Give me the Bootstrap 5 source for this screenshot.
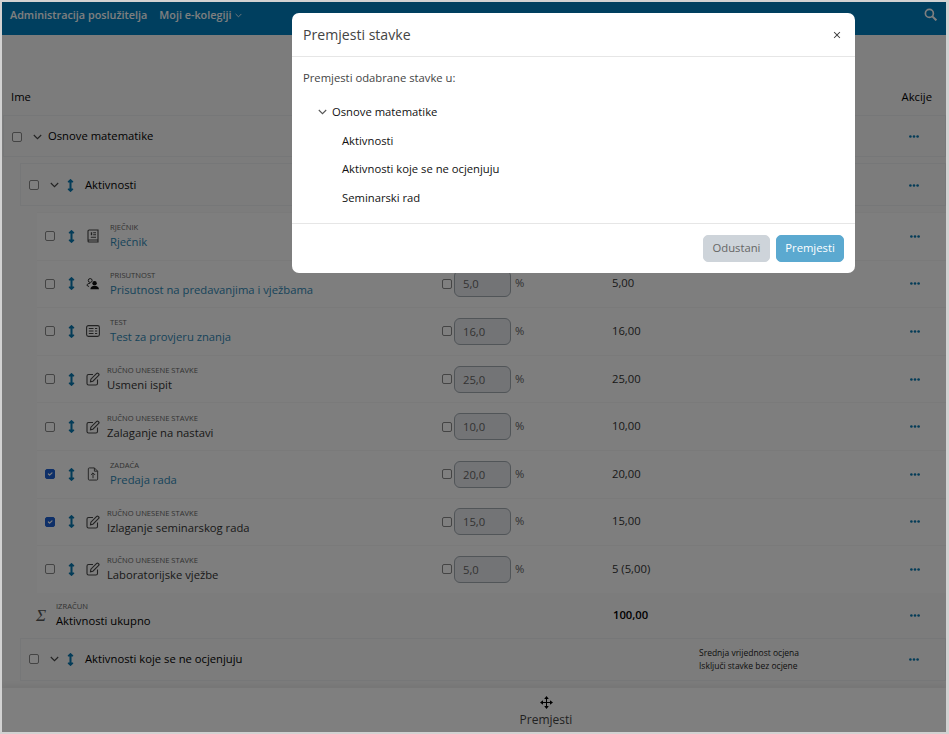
<!DOCTYPE html>
<html lang="hr">
<head>
  <meta charset="UTF-8" />
  <title>Premjesti stavke</title>
  <meta name="viewport" content="width=device-width, initial-scale=1" />
  <link href="https://cdn.jsdelivr.net/npm/bootstrap@5.3.3/dist/css/bootstrap.min.css" rel="stylesheet" />
  <style>
    html, body { height: 100%; }
    body {
      background: #d2d2d2;
      padding: 2px 3px 2px 2px;
      font-family: "Open Sans", "Liberation Sans", sans-serif;
      font-size: 11.25px;
      color: #333;
      overflow: hidden;
    }
    .shell {
      position: relative;
      height: 730px;
      background: #f8f8f8;
      overflow: hidden;
    }
    .top-bar { height: 33px; background: #007ebe; padding: 0 9px 0 8px; }
    .top-bar .nav-link { color: #fff; font-weight: 600; padding: 5px 0 0; font-size: 10.8px; }
    .top-bar .nav { column-gap: 12px; }
    .top-bar .search-ico { width: 13px; height: 13px; margin-top: 6px; color: #fff; }
    .head-row { padding: 54px 14px 0 9px; height: 80px; color: #000; font-weight: 500; }
    .box-row {
      height: 43px;
      border: 1px solid #eceef0;
      background: #f9f9f9;
    }
    .top-box { margin: 0 0 6px 1px; height: 42px; padding-top: 1px; }
    .cat-box { margin: 0 0 6px 18px; padding-top: 1px; }
    .cat-last { margin: 0 0 0 18px; }
    .box-title { color: #000; font-weight: 500; }
    .item-row {
      height: 47.6px;
      margin-left: 35px;
      background: #fcfcfc;
      border-top: 1px solid #f4f4f4;
    }
    .calc-row { height: 45px; margin-left: 18px; }
    .col-name { width: 405px; flex: none; }
    .col-weight { width: 170px; flex: none; }
    .col-value { width: 87px; flex: none; }
    .col-note { flex: 1 1 auto; font-size: 8.5px; line-height: 13px; color: #222; }
    .col-act { width: 64px; flex: none; padding-left: 28px; }
    .cb.form-check-input {
      width: 10px;
      height: 10px;
      margin: 0;
      flex: none;
      border: 1px solid #888;
      border-radius: 2px;
      background-color: #fff;
    }
    .cb.form-check-input:checked { background-color: #1c5fd0; border-color: #1c5fd0; }
    .ico-move { width: 7px; height: 13px; color: #0878b0; flex: none; }
    .ico-chev { width: 9px; height: 6px; flex: none; color: #444; }
    .ico-dots { width: 10px; height: 3px; color: #0878b0; display: block; }
    .ico-type { width: 14px; height: 14px; flex: none; color: #444; }
    .ico-users { color: #111; }
    .item-label { font-size: 7.6px; line-height: 11px; color: #666; text-transform: uppercase; }
    .item-name { font-size: 11.25px; line-height: 17px; color: #333; }
    .item-name.box-title { color: #000; }
    .item-name a { color: #2f88b5; text-decoration: none; }
    .name-link { margin-left: 10px; }
    .name-plain { margin-left: 7px; }
    .grade-box {
      width: 57px;
      height: 27px;
      margin: 0 4px 0 2px;
      padding: 0 8px;
      color: #666;
      background: #e6e9ed;
      border: 1px solid #a2aab1;
      border-radius: 6px;
      line-height: 25px;
    }
    .pct { color: #666; }
    .sigma { font-family: "Liberation Serif", serif; font-style: italic; font-size: 17px; color: #555; width: 20px; flex: none; }
    .bottom-bar {
      position: relative;
      margin-top: 7px;
      height: 44px;
      background: #fff;
      box-shadow: 0 -3px 5px rgba(0, 0, 0, .05);
      padding: 8px 0 0 516px;
      text-align: center;
      color: #444;
      font-size: 12px;
    }
    .bottom-bar .txt-wrap { width: 56px; }
    .ico-cross { width: 13px; height: 13px; color: #000; margin: 0 auto 2px; display: block; }
    .modal-backdrop.shade { position: absolute; width: 100%; height: 100%; z-index: 10; }
    .modal.move-modal { position: absolute; display: block; z-index: 20; overflow: hidden; }
    .move-modal .modal-dialog { max-width: 563px; width: 563px; margin: 11px 0 0 290px; }
    .move-modal .modal-content { border: 0; border-radius: 7px; }
    .move-modal .modal-header { height: 44px; padding: 1px 11px 0 11px; border-bottom: 1px solid #e6e6e6; }
    .move-modal .modal-title { font-size: 14.1px; color: #444; font-weight: 400; }
    .move-modal .btn-close { width: 8px; height: 8px; padding: 0; margin: 0 3px 0 0; background-size: 8px; opacity: .75; }
    .move-modal .modal-body { padding: 13px 11px 0; height: 166px; color: #444; }
    .tree-root { padding: 17px 0 0 15px; color: #111; font-weight: 500; }
    .tree-root .ico-chev { color: #555; margin-right: 5px; }
    .tree-list { padding: 0 0 0 39px; margin: 0; list-style: none; color: #111; font-weight: 500; }
    .tree-list li { height: 28.4px; line-height: 28.4px; }
    .tree-list li:first-child { margin-top: 6px; }
    .move-modal .modal-footer { height: 50px; padding: 0 11px; border-top: 1px solid #e6e6e6; }
    .move-modal .modal-footer .btn { font-size: 11.25px; height: 27px; padding: 0; margin: 0 0 0 6px; border-radius: 5px; width: 68px; }
    .move-modal .modal-footer .btn-cancel { width: 67px; }
    .btn-cancel { background: #ced4da; border-color: #ced4da; color: #666; }
    .btn-move { background: #5ba9d0; border-color: #5ba9d0; color: #fff; }
  </style>
</head>
<body>
  <svg width="0" height="0" class="position-absolute">
    <symbol id="i-move" viewBox="0 0 256 512"><path fill="currentColor" d="M214 378h-46V134h46c21 0 32-26 17-41L145 7c-9-9-25-9-34 0L25 93c-15 15-4 41 17 41h46v244H42c-21 0-32 26-17 41l86 86c9 9 25 9 34 0l86-86c15-15 4-41-17-41z"/></symbol>
    <symbol id="i-chev" viewBox="0 0 9 6"><path fill="none" stroke="currentColor" stroke-width="1.1" d="M.8 1l3.700 3.700L8.200 1"/></symbol>
    <symbol id="i-dots" viewBox="0 0 10 3"><circle cx="1.400" cy="1.500" r="1.300" fill="currentColor"/><circle cx="5" cy="1.500" r="1.300" fill="currentColor"/><circle cx="8.600" cy="1.500" r="1.300" fill="currentColor"/></symbol>
    <symbol id="i-book" viewBox="0 0 14 14"><path fill="none" stroke="currentColor" stroke-width="1.100" d="M2 11.500V2.200C2 1.500 2.500 1 3.200 1H12v10H3c-.6 0-1 .4-1 1s.4 1 1 1h9v-2"/><path fill="currentColor" d="M4.800 3.200h1.400v3H4.800zM7.200 3.200h2.800v1H7.200zM7.200 5.200h2.800v1H7.200zM4.800 7.800h5.200v1H4.800z"/></symbol>
    <symbol id="i-users" viewBox="0 0 16 14"><circle cx="4.800" cy="3" r="2.200" fill="none" stroke="currentColor"/><path fill="none" stroke="currentColor" d="M1 8.500c.4-1.400 1.800-2.300 3.800-2.300M1 8.500l2.500 1.500"/><circle cx="9.800" cy="6" r="2.500" fill="currentColor"/><path fill="currentColor" d="M5 13c0-2.600 2-4 4.800-4s5 1.400 5 4z"/></symbol>
    <symbol id="i-list" viewBox="0 0 14 14"><rect x=".6" y="1.600" width="12.800" height="10.800" rx="1.800" fill="none" stroke="currentColor" stroke-width="1.100"/><path fill="currentColor" d="M2.800 4h4.700v1H2.800zM2.800 6.500h4.700v1H2.800zM2.800 9h4.700v1H2.800zM9 4h2.200v1H9zM9 6.500h2.200v1H9zM9 9h2.200v1H9z"/></symbol>
    <symbol id="i-edit" viewBox="0 0 14 14"><path fill="none" stroke="currentColor" stroke-width="1.100" d="M7 2.500H2.600C1.700 2.500 1 3.200 1 4.100v7.300c0 .9.700 1.600 1.600 1.600h7.300c.9 0 1.600-.7 1.600-1.600V7.500"/><path fill="none" stroke="currentColor" stroke-width="1.100" d="M4.500 9.700l.4-2.500L10.700 1.400c.4-.4 1-.4 1.400 0l.6.6c.4.400.4 1 0 1.400L6.900 9.200z"/></symbol>
    <symbol id="i-file" viewBox="0 0 12 15"><path fill="none" stroke="currentColor" stroke-width="1" d="M1 2c0-.6.400-1 1-1h5.500L11 4.500V13c0 .6-.4 1-1 1H2c-.6 0-1-.4-1-1z"/><path fill="none" stroke="currentColor" stroke-width="1" d="M7.500 1v3.500H11M6 12V6.500M3.800 8.500L6 6.300l2.200 2.200"/></symbol>
    <symbol id="i-cross" viewBox="0 0 13 13"><path fill="none" stroke="currentColor" d="M6.500 2v9M2 6.500h9"/><path fill="currentColor" d="M6.500 0l2.300 3H4.200zM6.500 13l2.300-3H4.200zM0 6.500l3-2.300v4.600zM13 6.500l-3-2.300v4.600z"/></symbol>
  </svg>

  <div class="shell">
    <nav class="top-bar d-flex justify-content-between">
      <ul class="nav">
        <li class="nav-item"><a class="nav-link" href="#">Administracija poslužitelja</a></li>
        <li class="nav-item d-flex">
          <a class="nav-link" href="#">Moji e-kolegiji</a>
          <svg class="ico-chev ms-1 text-white" style="margin-top:11px;width:7px;height:5px"><use href="#i-chev"/></svg>
        </li>
      </ul>
      <svg class="search-ico" viewBox="0 0 14 14"><circle cx="5.800" cy="5.800" r="4.300" fill="none" stroke="currentColor" stroke-width="1.800"/><path stroke="currentColor" stroke-width="2.200" d="M9 9l4.300 4.300"/></svg>
    </nav>

    <div class="head-row d-flex justify-content-between"><span>Ime</span><span>Akcije</span></div>

    <div class="box-row top-box d-flex align-items-center">
      <input class="form-check-input cb" type="checkbox" style="margin-left:8px" />
      <svg class="ico-chev" style="margin:0 6px 0 11px"><use href="#i-chev"/></svg>
      <span class="box-title">Osnove matematike</span>
      <span class="col-act ms-auto"><svg class="ico-dots"><use href="#i-dots"/></svg></span>
    </div>

    <div class="box-row cat-box d-flex align-items-center">
      <input class="form-check-input cb" type="checkbox" style="margin-left:8px" />
      <svg class="ico-chev" style="margin:0 8px 0 11px"><use href="#i-chev"/></svg>
      <svg class="ico-move" style="margin-right:11px"><use href="#i-move"/></svg>
      <span class="box-title">Aktivnosti</span>
      <span class="col-act ms-auto"><svg class="ico-dots"><use href="#i-dots"/></svg></span>
    </div>

    <div id="items"></div>

    <div class="calc-row d-flex align-items-center">
      <div class="col-name d-flex align-items-center ps-3" style="width:421px">
        <span class="sigma">&Sigma;</span>
        <div>
          <div class="item-label">Izračun</div>
          <div class="item-name box-title">Aktivnosti ukupno</div>
        </div>
      </div>
      <div class="col-weight" style="width:172px"></div>
      <div class="col-value fw-semibold" style="color:#000">100,00</div>
      <div class="col-note"></div>
      <div class="col-act"><svg class="ico-dots"><use href="#i-dots"/></svg></div>
    </div>

    <div class="box-row cat-last d-flex align-items-center">
      <input class="form-check-input cb" type="checkbox" style="margin-left:8px" />
      <svg class="ico-chev" style="margin:0 8px 0 11px"><use href="#i-chev"/></svg>
      <svg class="ico-move" style="margin-right:11px"><use href="#i-move"/></svg>
      <span class="box-title">Aktivnosti koje se ne ocjenjuju</span>
      <div class="col-note flex-grow-0 ms-auto" style="width:182px">Srednja vrijednost ocjena<br />Isključi stavke bez ocjene</div>
      <span class="col-act"><svg class="ico-dots"><use href="#i-dots"/></svg></span>
    </div>

    <div class="bottom-bar">
      <div class="txt-wrap">
        <svg class="ico-cross"><use href="#i-cross"/></svg>
        Premjesti
      </div>
    </div>

    <div class="modal-backdrop show shade"></div>

    <div class="modal move-modal" tabindex="-1">
      <div class="modal-dialog">
        <div class="modal-content">
          <div class="modal-header">
            <h5 class="modal-title">Premjesti stavke</h5>
            <button type="button" class="btn-close" aria-label="Close"></button>
          </div>
          <div class="modal-body">
            Premjesti odabrane stavke u:
            <div class="tree-root d-flex align-items-center"><svg class="ico-chev"><use href="#i-chev"/></svg>Osnove matematike</div>
            <ul class="tree-list">
              <li>Aktivnosti</li>
              <li>Aktivnosti koje se ne ocjenjuju</li>
              <li>Seminarski rad</li>
            </ul>
          </div>
          <div class="modal-footer">
            <button type="button" class="btn btn-cancel">Odustani</button>
            <button type="button" class="btn btn-move">Premjesti</button>
          </div>
        </div>
      </div>
    </div>
  </div>

  <script src="https://cdn.jsdelivr.net/npm/bootstrap@5.3.3/dist/js/bootstrap.bundle.min.js"></script>
  <script>
    const items = [
      { type: "Rječnik", name: "Rječnik", icon: "book", link: true },
      { type: "Prisutnost", name: "Prisutnost na predavanjima i vježbama", icon: "users", link: true, w: "5,0", v: "5,00" },
      { type: "Test", name: "Test za provjeru znanja", icon: "list", link: true, w: "16,0", v: "16,00" },
      { type: "Ručno unesene stavke", name: "Usmeni ispit", icon: "edit", w: "25,0", v: "25,00" },
      { type: "Ručno unesene stavke", name: "Zalaganje na nastavi", icon: "edit", w: "10,0", v: "10,00" },
      { type: "Zadaća", name: "Predaja rada", icon: "file", link: true, w: "20,0", v: "20,00", on: true },
      { type: "Ručno unesene stavke", name: "Izlaganje seminarskog rada", icon: "edit", w: "15,0", v: "15,00", on: true },
      { type: "Ručno unesene stavke", name: "Laboratorijske vježbe", icon: "edit", w: "5,0", v: "5 (5,00)" }
    ];

    document.getElementById("items").innerHTML = items.map(it => `
      <div class="item-row d-flex align-items-center">
        <div class="col-name d-flex align-items-center ps-2">
          <input class="form-check-input cb" type="checkbox" ${it.on ? "checked" : ""} />
          <svg class="ico-move" style="margin:0 11px 0 13px"><use href="#i-move"/></svg>
          <svg class="ico-type ${it.icon === "users" ? "ico-users" : ""}"><use href="#i-${it.icon}"/></svg>
          <div class="${it.link ? "name-link" : "name-plain"}">
            <div class="item-label">${it.type}</div>
            <div class="item-name">${it.link ? `<a href="#">${it.name}</a>` : it.name}</div>
          </div>
        </div>
        <div class="col-weight d-flex align-items-center">
          ${it.w ? `<input class="form-check-input cb" type="checkbox" /><span class="grade-box">${it.w}</span><span class="pct">%</span>` : ""}
        </div>
        <div class="col-value">${it.v || ""}</div>
        <div class="col-note"></div>
        <div class="col-act"><svg class="ico-dots"><use href="#i-dots"/></svg></div>
      </div>`).join("");
  </script>
</body>
</html>
